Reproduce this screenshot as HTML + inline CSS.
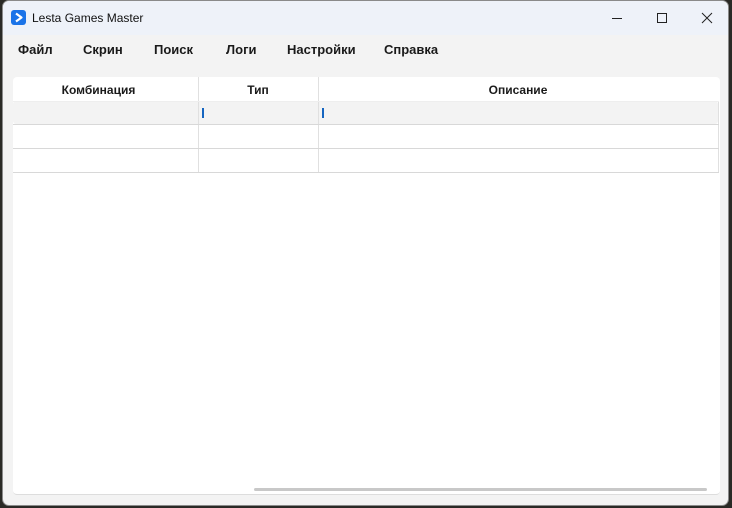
<!DOCTYPE html>
<html><head><meta charset="utf-8"><style>
*{margin:0;padding:0;box-sizing:border-box}
body{width:732px;height:508px;background:#2a2a26;position:relative;overflow:hidden;font-family:"Segoe UI","Liberation Sans","DejaVu Sans",sans-serif}
.win{position:absolute;left:2px;top:0;width:727px;height:506px;background:#f3f3f3;border-radius:7px;overflow:hidden;border:1px solid #8a8a8a}
.title{position:absolute;left:0;top:0;width:100%;height:34px;background:#eef2f9}
.ttxt{position:absolute;left:29px;top:10px;font-size:12px;color:#111}
.logo{position:absolute;left:8px;top:9px;width:15px;height:15px;background:#1a73e8;border-radius:3px}
.menu{position:absolute;top:41px;font-size:13px;font-weight:bold;color:#1a1a1a}
.panel{position:absolute;left:10px;top:76px;width:707px;height:418px;background:#fff;border-radius:4px;border-bottom:1px solid #ddd}
.hdr{position:absolute;top:6px;font-size:12px;font-weight:bold;color:#1a1a1a;text-align:center}
.vl{position:absolute;width:1px;background:#e0e0e0;top:0;height:96px}
.hl{position:absolute;left:0;width:706px;height:1px;background:#d8d8d8}
.cur{position:absolute;top:31px;width:2px;height:10px;background:#1565c0}
</style></head><body>
<div class="win">
 <div class="title">
  <div class="logo"><svg width="15" height="15"><path d="M5 3.5 L10.5 7.5 L5 11.5" fill="none" stroke="#fff" stroke-width="2.2" stroke-linejoin="round"/></svg></div>
  <div class="ttxt">Lesta Games Master</div>
  <svg style="position:absolute;left:608px;top:11px" width="12" height="12"><path d="M1 6.5H11" stroke="#222" stroke-width="1"/></svg>
  <svg style="position:absolute;left:653px;top:11px" width="12" height="12"><rect x="1.5" y="1.5" width="9" height="9" fill="none" stroke="#222" stroke-width="1"/></svg>
  <svg style="position:absolute;left:698px;top:11px" width="12" height="12"><path d="M1 1L11 11M11 1L1 11" stroke="#222" stroke-width="1"/></svg>
 </div>
 <div class="menu" style="left:15px">Файл</div>
 <div class="menu" style="left:80px">Скрин</div>
 <div class="menu" style="left:151px">Поиск</div>
 <div class="menu" style="left:223px">Логи</div>
 <div class="menu" style="left:284px">Настройки</div>
 <div class="menu" style="left:381px">Справка</div>
 <div class="panel">
  <div class="hdr" style="left:0;width:171px">Комбинация</div>
  <div class="hdr" style="left:185px;width:120px">Тип</div>
  <div class="hdr" style="left:305px;width:400px">Описание</div>
  <div style="position:absolute;left:0;top:24px;width:705px;height:23px;background:#f3f3f3;border-radius:3px"></div>
  <div class="vl" style="left:185px"></div>
  <div class="vl" style="left:305px"></div>
  <div class="vl" style="left:705px;top:24px;height:72px"></div>
  <div class="hl" style="top:24px;background:#eee"></div>
  <div class="hl" style="top:47px"></div>
  <div class="hl" style="top:71px"></div>
  <div class="hl" style="top:95px"></div>
  <div class="cur" style="left:189px"></div>
  <div class="cur" style="left:309px"></div>
  <div style="position:absolute;left:241px;top:411px;width:453px;height:3px;background:#c8c8c8;border-radius:2px"></div>
 </div>
</div>
</body></html>
